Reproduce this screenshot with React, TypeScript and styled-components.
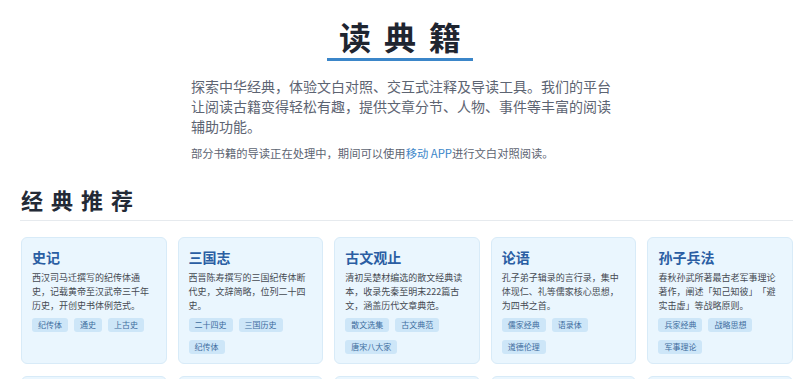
import React, { FC } from "react";
import styled, { createGlobalStyle } from "styled-components";

const GlobalStyle = createGlobalStyle`
  body {
    margin: 0;
    background: #ffffff;
    font-family: "Noto Sans CJK SC", "Noto Sans", sans-serif;
  }
`;

const Page = styled.div`
  width: 800px;
  overflow: hidden;
`;

const Hero = styled.header`
  display: flex;
  flex-direction: column;
  align-items: center;
  padding-top: 14px;
`;

const Title = styled.h1`
  margin: 0;
  font-size: 32px;
  line-height: 44px;
  font-weight: 700;
  color: #1f2530;
  letter-spacing: 13px;
  padding-left: 13px;
`;

const TitleBar = styled.div`
  width: 146px;
  height: 3px;
  background: #3b86c9;
`;

const Intro = styled.div`
  width: 422px;
  margin-top: 15px;
  padding-left: 4px;
`;

const IntroText = styled.p`
  margin: 0;
  font-size: 14px;
  line-height: 20px;
  color: #5d6472;
`;

const Note = styled.p`
  margin: 9px 0 0;
  font-size: 11.3px;
  line-height: 16px;
  color: #5d6472;
`;

const Link = styled.span`
  color: #3b86c9;
`;

const Section = styled.section`
  padding: 0 7px 0 21px;
  margin-top: 23px;
`;

const SectionTitle = styled.h2`
  margin: 0;
  font-size: 22px;
  line-height: 30px;
  font-weight: 700;
  color: #232a36;
  letter-spacing: 8px;
`;

const Divider = styled.div`
  height: 1px;
  background: #e6eaee;
  margin: 6px 0 0 -1px;
`;

const Grid = styled.div`
  display: grid;
  grid-template-columns: repeat(5, 1fr);
  column-gap: 11px;
  row-gap: 12px;
  margin-top: 16px;
`;

const Card = styled.div`
  height: 127px;
  box-sizing: border-box;
  background: #eaf6fe;
  border: 1px solid #d8ebf8;
  border-radius: 6px;
  padding: 9px 13px 9px 10px;
`;

const CardTitle = styled.h3`
  margin: 0;
  font-size: 14px;
  line-height: 20px;
  font-weight: 700;
  color: #2a5ea3;
`;

const CardDesc = styled.p`
  margin: 4px 0 0;
  font-size: 9px;
  line-height: 14px;
  color: #454a52;
  text-spacing-trim: space-all;
`;

const Tags = styled.div`
  display: flex;
  flex-wrap: wrap;
  gap: 8px 6px;
  margin-top: 5px;
`;

const Tag = styled.span`
  font-size: 8px;
  line-height: 14px;
  padding: 0 6px;
  border-radius: 3px;
  background: #cde6f8;
  color: #3d6d9e;
`;

interface Book {
  title: string;
  desc: string;
  tags: string[];
}

const books: Book[] = [
  {
    title: "史记",
    desc: "西汉司马迁撰写的纪传体通史，记载黄帝至汉武帝三千年历史，开创史书体例范式。",
    tags: ["纪传体", "通史", "上古史"],
  },
  {
    title: "三国志",
    desc: "西晋陈寿撰写的三国纪传体断代史，文辞简略，位列二十四史。",
    tags: ["二十四史", "三国历史", "纪传体"],
  },
  {
    title: "古文观止",
    desc: "清初吴楚材编选的散文经典读本，收录先秦至明末222篇古文，涵盖历代文章典范。",
    tags: ["散文选集", "古文典范", "唐宋八大家"],
  },
  {
    title: "论语",
    desc: "孔子弟子辑录的言行录，集中体现仁、礼等儒家核心思想，为四书之首。",
    tags: ["儒家经典", "语录体", "道德伦理"],
  },
  {
    title: "孙子兵法",
    desc: "春秋孙武所著最古老军事理论著作，阐述「知己知彼」「避实击虚」等战略原则。",
    tags: ["兵家经典", "战略思想", "军事理论"],
  },
];

const more: Book[] = [
  { title: "资治通鉴", desc: "", tags: [] },
  { title: "诗经", desc: "", tags: [] },
  { title: "道德经", desc: "", tags: [] },
  { title: "楚辞", desc: "", tags: [] },
  { title: "孟子", desc: "", tags: [] },
];

const App: FC = () => {
  return (
    <Page>
      <GlobalStyle />
      <Hero>
        <Title>读典籍</Title>
        <TitleBar />
        <Intro>
          <IntroText>
            探索中华经典，体验文白对照、交互式注释及导读工具。我们的平台让阅读古籍变得轻松有趣，提供文章分节、人物、事件等丰富的阅读辅助功能。
          </IntroText>
          <Note>
            部分书籍的导读正在处理中，期间可以使用<Link>移动 APP</Link>进行文白对照阅读。
          </Note>
        </Intro>
      </Hero>
      <Section>
        <SectionTitle>经典推荐</SectionTitle>
        <Divider />
        <Grid>
          {[...books, ...more].map((book, index) => (
            <Card key={index}>
              <CardTitle>{book.title}</CardTitle>
              {book.desc && <CardDesc>{book.desc}</CardDesc>}
              {book.tags.length > 0 && (
                <Tags>
                  {book.tags.map((tag) => (
                    <Tag key={tag}>{tag}</Tag>
                  ))}
                </Tags>
              )}
            </Card>
          ))}
        </Grid>
      </Section>
    </Page>
  );
};

export default App;
